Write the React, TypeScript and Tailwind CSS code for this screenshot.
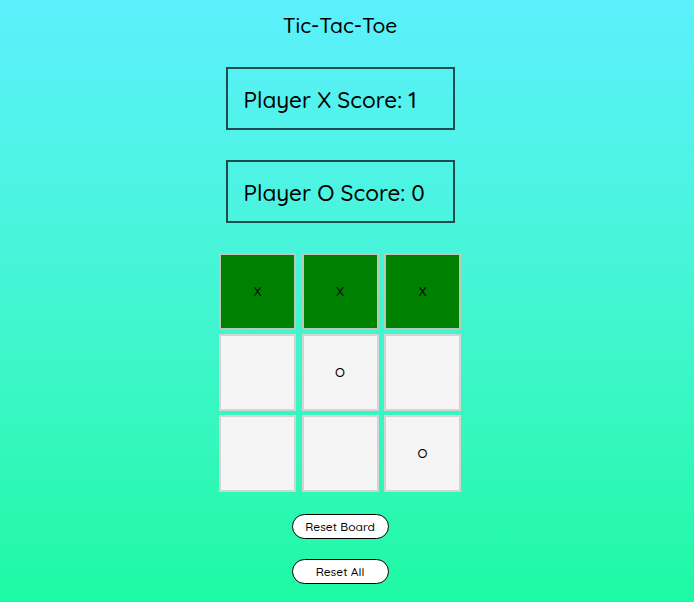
const board = ["X", "X", "X", "", "O", "", "", "", "O"];
const winning = [0, 1, 2];

export default function App() {
  return (
    <div
      className="min-h-[602px] w-full bg-gradient-to-b from-[#5cf0fd] to-[#1cf9a3] pr-[14px] flex flex-col items-center text-black font-medium"
      style={{ fontFamily: "Quicksand, Lato, 'Noto Sans', sans-serif" }}
    >
      <h1 className="mt-[12px] text-[21px] leading-[26px]">Tic-Tac-Toe</h1>

      <div className="mt-[29px] w-[229px] h-[63px] border-2 border-[#1d4d4f] flex items-center pl-[16px] pt-[2px] text-[22.5px]">
        Player X Score: 1
      </div>
      <div className="mt-[30px] w-[229px] h-[63px] border-2 border-[#1d4d4f] flex items-center pl-[16px] pt-[2px] text-[22.5px]">
        Player O Score: 0
      </div>

      <div className="mt-[30px] grid grid-cols-[repeat(3,77px)] gap-x-[5.5px] gap-y-[4px]">
        {board.map((v, i) => (
          <div
            key={i}
            className={
              "h-[77px] border-2 flex items-center justify-center text-[13px] " +
              (winning.includes(i)
                ? "bg-[#008000] border-[#b8c9b8]"
                : "bg-[#f5f5f5] border-[#d4d4d4]")
            }
          >
            {v}
          </div>
        ))}
      </div>

      <button className="mt-[22px] w-[97px] h-[25px] rounded-full border border-black bg-white text-[12px]">
        Reset Board
      </button>
      <button className="mt-[20px] w-[97px] h-[25px] rounded-full border border-black bg-white text-[12px]">
        Reset All
      </button>
    </div>
  );
}
